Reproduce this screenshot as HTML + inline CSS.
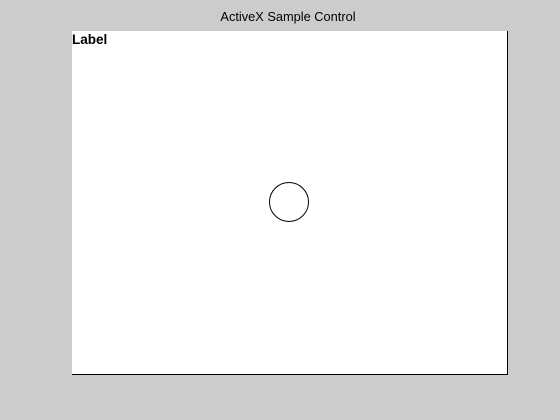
<!DOCTYPE html>
<html><head><style>
body{margin:0;width:560px;height:420px;background:#cccccc;position:relative;overflow:hidden;font-family:"Liberation Sans",sans-serif}
.t{position:absolute;left:0;width:576px;top:9px;text-align:center;font-size:12.8px;color:#000}
.box{position:absolute;left:72px;top:31px;width:435px;height:343px;background:#fff;border-right:1px solid #000;border-bottom:1px solid #000}
.l{position:absolute;left:72px;top:32px;font-size:13.5px;font-weight:bold}
svg{position:absolute;left:0;top:0}
</style></head><body>
<div class="t">ActiveX Sample Control</div>
<div class="box"></div>
<div class="l">Label</div>
<svg width="560" height="420"><circle cx="289" cy="202" r="19.5" fill="none" stroke="#000" stroke-width="1"/></svg>
</body></html>
